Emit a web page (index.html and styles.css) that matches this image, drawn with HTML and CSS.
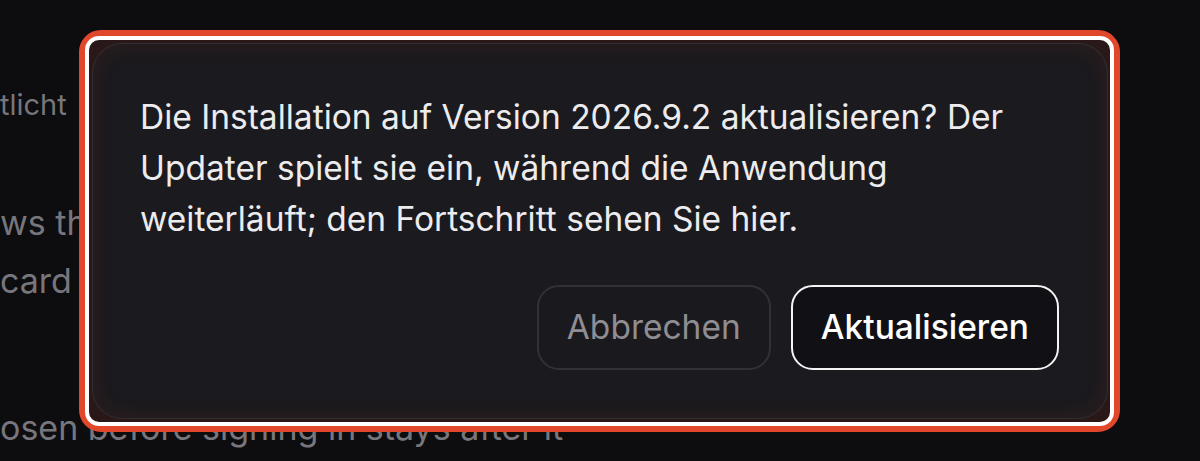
FILE: index.html
```html
<!DOCTYPE html>
<html lang="de">
<head>
<meta charset="utf-8">
<title>Update</title>
<link rel="stylesheet" href="styles.css">
</head>
<body>
<main class="page">
  <p class="bg-line first">tlicht</p>
  <p class="bg-line second">ws the</p>
  <p class="bg-line">card</p>
  <p class="bg-line last">osen before signing in stays after it</p>
</main>
<div class="ring">
  <div class="ring-inner">
    <section class="dialog" role="dialog" aria-modal="true">
      <p class="dialog-text">Die Installation auf Version 2026.9.2 aktualisieren? Der Updater spielt sie ein, während die Anwendung weiterläuft; den Fortschritt sehen Sie hier.</p>
      <div class="actions">
        <button class="btn btn-cancel" type="button">Abbrechen</button>
        <button class="btn btn-primary" type="button">Aktualisieren</button>
      </div>
    </section>
  </div>
</div>
</body>
</html>
```
FILE: styles.css
```css
html, body {
  margin: 0;
  padding: 0;
  height: 100%;
}
body {
  background: #0d0c0e;
  font-family: Inter, "Noto Sans", sans-serif;
  overflow: hidden;
  position: relative;
}
.page {
  padding-top: 76px;
  display: flex;
  flex-direction: column;
}
.bg-line {
  margin: 0;
  font-size: 34px;
  line-height: 58px;
  color: #77767c;
  white-space: nowrap;
}
.bg-line.first {
  font-size: 29px;
}
.bg-line.second {
  margin-top: 60px;
}
.bg-line.last {
  margin-top: 89px;
}
.ring {
  position: absolute;
  left: 79px;
  top: 30px;
  width: 1041px;
  height: 402px;
  box-sizing: border-box;
  border: 6px solid #e1472b;
  border-radius: 22px;
}
.ring-inner {
  box-sizing: border-box;
  height: 100%;
  border: 4px solid #ffffff;
  border-radius: 14px;
  background: #2a1818;
  padding: 3px 2px 3px 3px;
  display: flex;
}
.dialog {
  flex: 1;
  box-sizing: border-box;
  background: #1b1a1e;
  border: 1px solid rgba(255, 255, 255, 0.09);
  border-radius: 30px;
  padding: 48px 48px 48px 47px;
  box-shadow: inset 0 0 22px rgba(225, 71, 43, 0.10);
  display: flex;
  flex-direction: column;
}
.dialog-text {
  margin: 0;
  font-size: 33.5px;
  line-height: 51px;
  color: #ececee;
}
.actions {
  margin-top: 40px;
  display: flex;
  justify-content: flex-end;
  gap: 20px;
}
.btn {
  font-family: Inter, "Noto Sans", sans-serif;
  font-size: 33.5px;
  line-height: 45px;
  padding: 18px 28px;
  border-radius: 22px;
  cursor: pointer;
}
.btn-cancel {
  background: #1a191d;
  border: 2px solid #323136;
  color: #8e8d93;
}
.btn-primary {
  background: #111014;
  border: 2px solid #f4f4f5;
  color: #ffffff;
  font-weight: 500;
}
```
